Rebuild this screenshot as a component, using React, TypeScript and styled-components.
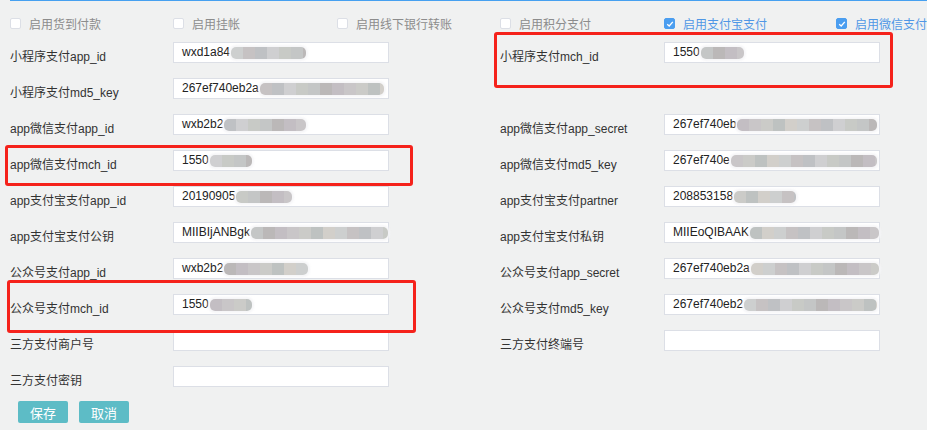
import React from "react";
import styled, { createGlobalStyle } from "styled-components";

const GlobalStyle = createGlobalStyle`
  body {
    margin: 0;
    background: #f0f1f1;
    font-family: "Liberation Sans", "Noto Sans CJK SC", sans-serif;
  }
`;

const Page = styled.div`
  position: relative;
  width: 927px;
  height: 430px;
  overflow: hidden;
  padding-left: 10px;
  box-sizing: border-box;
`;

const TopLine = styled.div`
  height: 1px;
  background: #46a0f0;
`;

const SwitchRow = styled.div`
  display: grid;
  grid-template-columns: 163px 164px 163px 164px 172px auto;
  margin-top: 14px;
  height: 14px;
  align-items: center;
  white-space: nowrap;
`;

const SwitchItem = styled.label<{ $on?: boolean }>`
  display: flex;
  align-items: center;
  gap: 8px;
  font-size: 12px;
  color: ${(p) => (p.$on ? "#4f97e6" : "#8c8c8c")};
`;

const Box = styled.span<{ $on?: boolean }>`
  width: 11px;
  height: 11px;
  box-sizing: border-box;
  border-radius: 2px;
  border: 1px solid ${(p) => (p.$on ? "#4b9ef0" : "#dcdfe6")};
  background: ${(p) => (p.$on ? "#4b9ef0" : "#fff")};
  display: flex;
  align-items: center;
  justify-content: center;
`;

const FormGrid = styled.div`
  display: grid;
  grid-template-columns: 163px 216px 111px 164px 216px;
  grid-auto-rows: 21px;
  row-gap: 15px;
  margin-top: 13px;
`;

const Label = styled.div<{ $col: number }>`
  grid-column: ${(p) => p.$col};
  font-size: 12px;
  line-height: 16px;
  padding-top: 7px;
  color: #333;
  white-space: nowrap;
`;

const Field = styled.div<{ $col: number }>`
  grid-column: ${(p) => p.$col};
  box-sizing: border-box;
  height: 21px;
  border: 1px solid #dcdfe6;
  background: #fff;
  padding-left: 8px;
  font-size: 12px;
  line-height: 19px;
  color: #222;
  white-space: nowrap;
  overflow: visible;
  display: flex;
  align-items: center;
`;

const shades = ["#cdcfcf", "#c6c2c3", "#bfc1c4", "#cfcfd1", "#c8cac6", "#c4c6c6", "#bbb8b8", "#c3bec3", "#c9c6c8", "#cbcbc8", "#bec2c1", "#d2cfca"];

const mosaic = (w: number, seed: number) => {
  const stops: string[] = [];
  const step = 12;
  for (let x = 0, i = seed; x < w; x += step, i++) {
    const c = shades[i % shades.length];
    stops.push(`${c} ${x}px`, `${c} ${Math.min(x + step, w)}px`);
  }
  return `linear-gradient(to right, ${stops.join(", ")})`;
};

const Smudge = styled.span<{ $w: number; $seed: number }>`
  display: inline-block;
  width: ${(p) => p.$w}px;
  height: 12px;
  margin-left: 1px;
  border-radius: 5px;
  background: ${(p) => mosaic(p.$w, p.$seed)};
  box-shadow: 0 0 2px 2px rgba(245, 245, 247, 0.9);
  filter: blur(0.3px);
`;

const Annotation = styled.div<{ $x: number; $y: number; $w: number; $h: number }>`
  position: absolute;
  left: ${(p) => p.$x}px;
  top: ${(p) => p.$y}px;
  width: ${(p) => p.$w}px;
  height: ${(p) => p.$h}px;
  box-sizing: border-box;
  border: 3px solid #f5221b;
  border-radius: 3px;
  pointer-events: none;
`;

const Actions = styled.div`
  display: flex;
  gap: 11px;
  margin-top: 14px;
  margin-left: 8px;
`;

const ActionButton = styled.button`
  width: 50px;
  height: 22px;
  border: none;
  border-radius: 2px;
  background: #5dbcc6;
  color: #fff;
  font-family: "Noto Sans CJK SC", sans-serif;
  font-size: 13px;
  padding: 0;
  cursor: pointer;
`;

const Check = () => (
  <svg width="8" height="8" viewBox="0 0 8 8">
    <path d="M1.2 4.2 L3.2 6 L6.8 1.8" fill="none" stroke="#fff" strokeWidth="1.3" />
  </svg>
);

type Cell = { label: string; value?: string; blur?: number };

const rows: [Cell, Cell | null][] = [
  [{ label: "小程序支付app_id", value: "wxd1a84", blur: 75 }, { label: "小程序支付mch_id", value: "1550", blur: 43 }],
  [{ label: "小程序支付md5_key", value: "267ef740eb2a", blur: 124 }, null],
  [{ label: "app微信支付app_id", value: "wxb2b2", blur: 82 }, { label: "app微信支付app_secret", value: "267ef740eb", blur: 140 }],
  [{ label: "app微信支付mch_id", value: "1550", blur: 42 }, { label: "app微信支付md5_key", value: "267ef740e", blur: 146 }],
  [{ label: "app支付宝支付app_id", value: "20190905", blur: 56 }, { label: "app支付宝支付partner", value: "208853158", blur: 62 }],
  [{ label: "app支付宝支付公钥", value: "MIIBIjANBgk", blur: 138 }, { label: "app支付宝支付私钥", value: "MIIEoQIBAAK", blur: 138 }],
  [{ label: "公众号支付app_id", value: "wxb2b2", blur: 84 }, { label: "公众号支付app_secret", value: "267ef740eb2a", blur: 130 }],
  [{ label: "公众号支付mch_id", value: "1550", blur: 42 }, { label: "公众号支付md5_key", value: "267ef740eb2", blur: 133 }],
  [{ label: "三方支付商户号" }, { label: "三方支付终端号" }],
  [{ label: "三方支付密钥" }, null],
];

const switches = [
  { text: "启用货到付款", on: false },
  { text: "启用挂帐", on: false },
  { text: "启用线下银行转账", on: false },
  { text: "启用积分支付", on: false },
  { text: "启用支付宝支付", on: true },
  { text: "启用微信支付", on: true },
];

const renderCell = (cell: Cell, labelCol: number, seed: number) => (
  <React.Fragment key={cell.label}>
    <Label $col={labelCol}>{cell.label}</Label>
    <Field $col={labelCol + 1}>
      {cell.value}
      {cell.blur ? <Smudge $w={cell.blur} $seed={seed} /> : null}
    </Field>
  </React.Fragment>
);

export default function App() {
  return (
    <>
      <GlobalStyle />
      <Page>
        <TopLine />
        <SwitchRow>
          {switches.map((s) => (
            <SwitchItem key={s.text} $on={s.on}>
              <Box $on={s.on}>{s.on && <Check />}</Box>
              {s.text}
            </SwitchItem>
          ))}
        </SwitchRow>
        <FormGrid>
          {rows.map(([left, right], i) => (
            <React.Fragment key={i}>
              {renderCell(left, 1, i)}
              {right ? renderCell(right, 4, i + 5) : null}
            </React.Fragment>
          ))}
        </FormGrid>
        <Actions>
          <ActionButton>保存</ActionButton>
          <ActionButton>取消</ActionButton>
        </Actions>
        <Annotation $x={494} $y={32} $w={399} $h={56} />
        <Annotation $x={5} $y={145} $w={408} $h={41} />
        <Annotation $x={7} $y={280} $w={409} $h={53} />
      </Page>
    </>
  );
}
